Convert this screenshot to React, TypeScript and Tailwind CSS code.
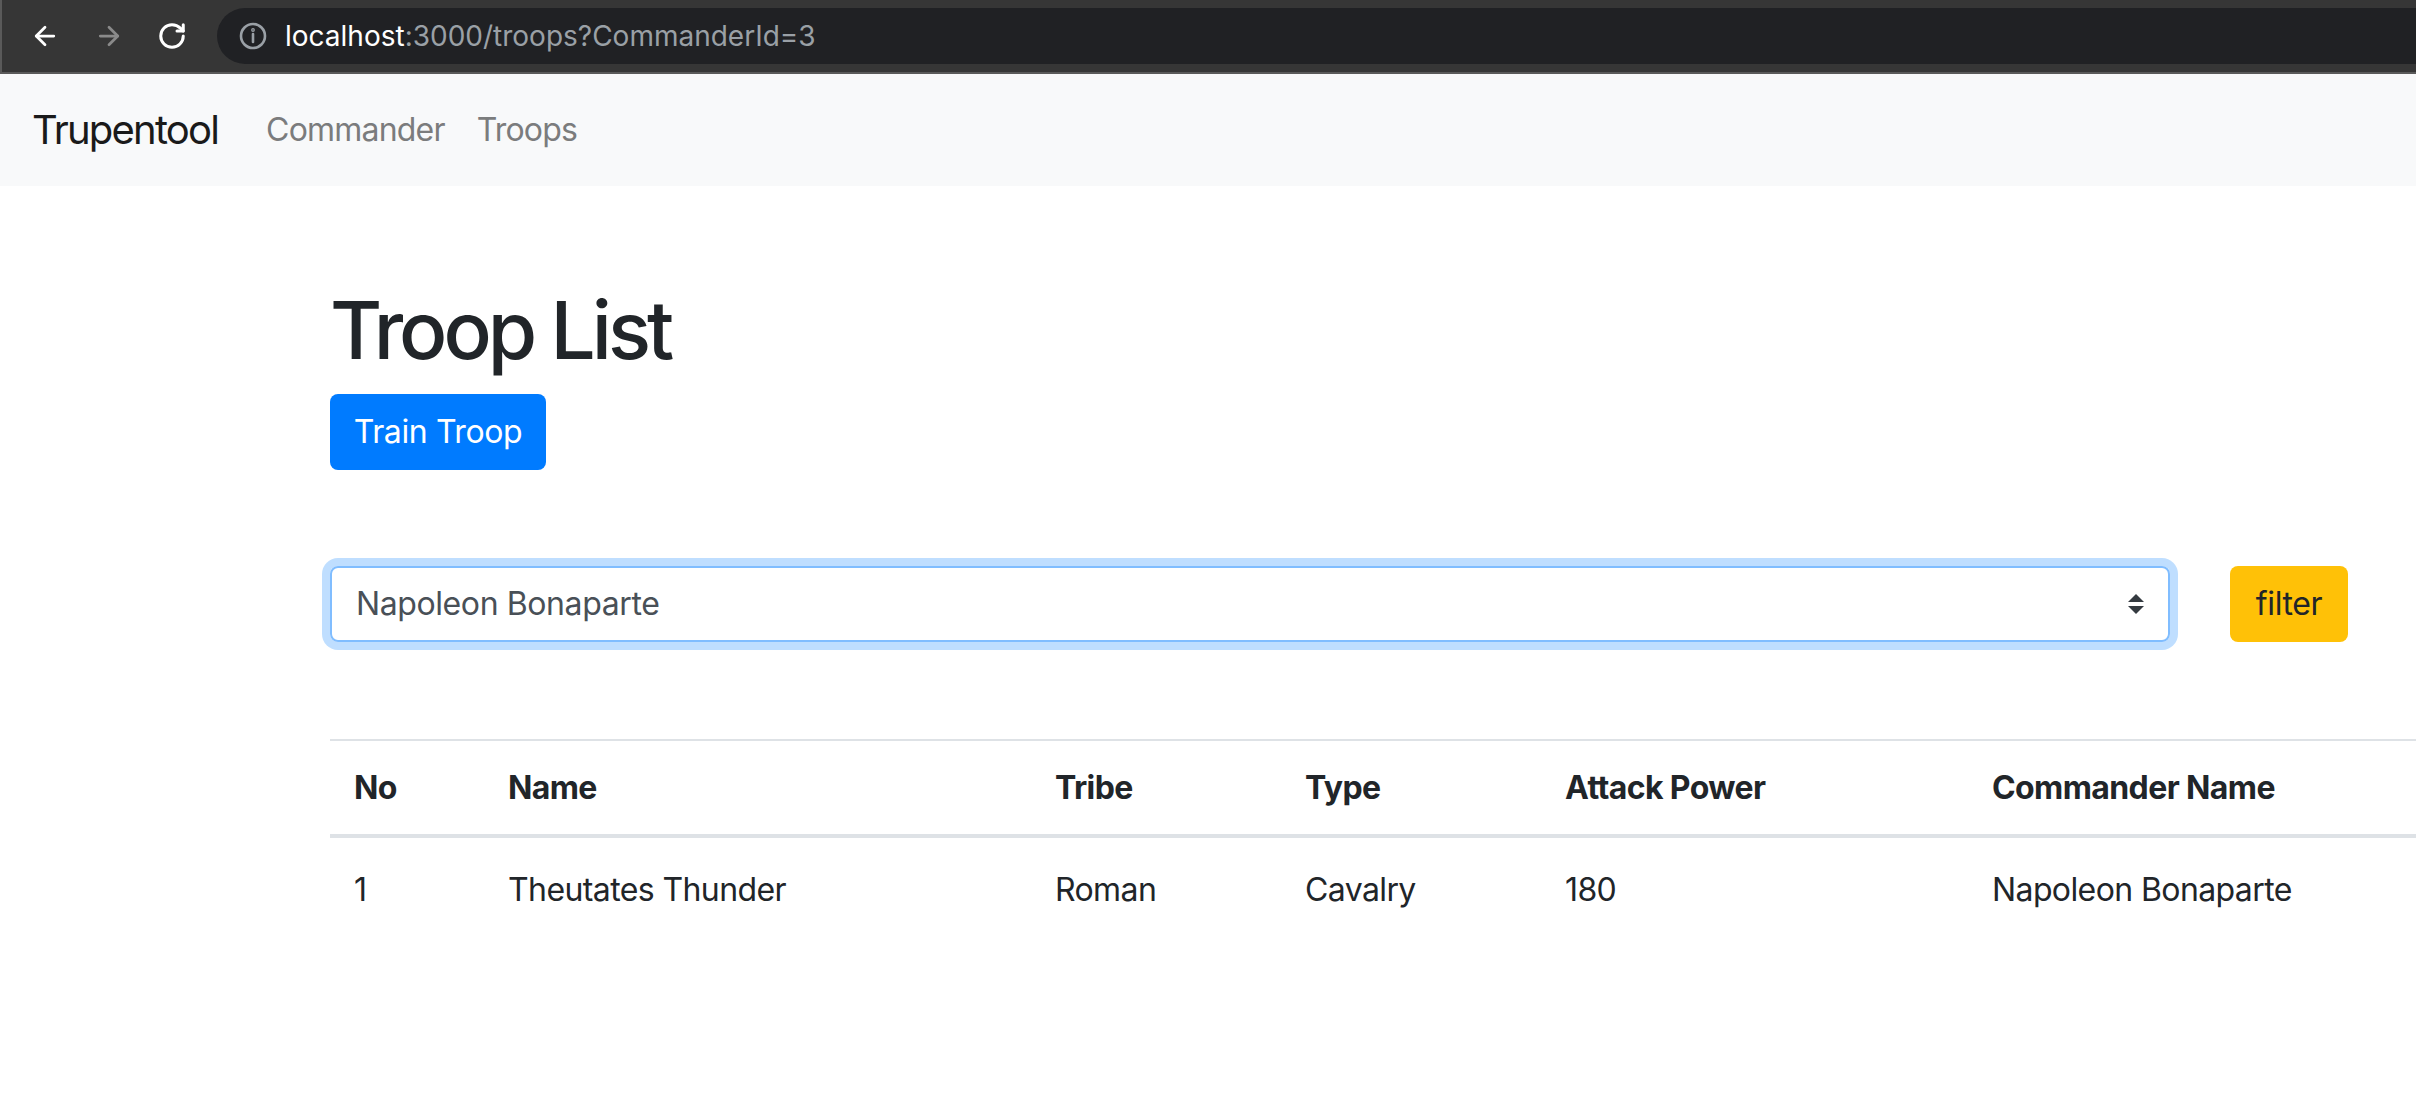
import { ArrowLeft, ArrowRight, RotateCw } from 'lucide-react';

const troops = [
  { no: 1, name: 'Theutates Thunder', tribe: 'Roman', type: 'Cavalry', attack: 180, commander: 'Napoleon Bonaparte' },
];

function BrowserBar() {
  return (
    <div className="h-[74px] bg-[#363636] border-l-2 border-[#5a5a5a] border-b-2 border-b-[#5a5a5a] flex items-center">
      <div className="flex items-center h-full">
        <ArrowLeft className="ml-[28px] w-[30px] h-[30px] text-white" strokeWidth={2.2} />
        <ArrowRight className="ml-[34px] w-[30px] h-[30px] text-[#8a8a8a]" strokeWidth={2.2} />
        <RotateCw className="ml-[33px] w-[30px] h-[30px] text-white" strokeWidth={2.4} />
      </div>
      <div className="ml-[30px] flex-1 h-[56px] bg-[#202124] rounded-l-full flex items-center">
        <svg viewBox="0 0 28 28" className="ml-[22px] w-[28px] h-[28px]" fill="none" stroke="#9aa0a6" strokeWidth="2.6">
          <circle cx="14" cy="14" r="12" />
          <line x1="14" y1="12" x2="14" y2="20" strokeLinecap="round" />
          <circle cx="14" cy="8" r="0.6" fill="#9aa0a6" />
        </svg>
        <span className="ml-[18px] text-[28px]">
          <span className="text-white">localhost</span>
          <span className="text-[#9aa0a6]">:3000/troops?CommanderId=3</span>
        </span>
      </div>
    </div>
  );
}

export default function App() {
  return (
    <div className="w-full min-h-screen bg-white overflow-hidden text-[#212529]" style={{ fontFamily: 'Inter, "Liberation Sans", sans-serif' }}>
      <BrowserBar />

      {/* Navbar */}
      <nav className="h-[112px] bg-[#f8f9fa] px-[32px] flex items-center">
        <span className="text-[40px] text-[#1a1a1a] mr-[32px] tracking-[-1.8px]">Trupentool</span>
        <a className="px-[16px] text-[32px] text-[#7b7c7d] tracking-[-0.8px]">Commander</a>
        <a className="px-[16px] text-[32px] text-[#7b7c7d] tracking-[-0.8px]">Troops</a>
      </nav>

      <div className="ml-[330px] w-[2220px] pt-[96px]">
        <h1 className="text-[80px] leading-[96px] font-medium mb-[16px] tracking-[-4px]">Troop List</h1>
        <button className="w-[216px] h-[76px] bg-[#007bff] text-white text-[32px] rounded-[8px] tracking-[-0.4px]">Train Troop</button>

        {/* Filter */}
        <div className="mt-[96px] flex items-center">
          <div className="w-[1840px] h-[76px] border-2 border-[#80bdff] rounded-[8px] ring-[8px] ring-[#007bff]/25 flex items-center justify-between pl-[24px] pr-[24px]">
            <span className="text-[32px] text-[#495057] tracking-[-0.4px]">Napoleon Bonaparte</span>
            <svg viewBox="0 0 4 5" className="w-[16px] h-[20px]">
              <path fill="#343a40" d="M2 0L0 2h4zm0 5L0 3h4z" />
            </svg>
          </div>
          <button className="ml-[60px] w-[118px] h-[76px] bg-[#ffc107] rounded-[8px] text-[32px] text-[#212529] tracking-[-0.4px]">filter</button>
        </div>

        {/* Table */}
        <table className="mt-[97px] w-[2220px] table-fixed border-collapse text-[32px] tracking-[-0.6px]">
          <colgroup>
            <col className="w-[154px]" />
            <col className="w-[547px]" />
            <col className="w-[250px]" />
            <col className="w-[260px]" />
            <col className="w-[427px]" />
            <col />
          </colgroup>
          <thead>
            <tr className="border-t-2 border-[#dee2e6] border-b-4 border-b-[#dee2e6]">
              {['No', 'Name', 'Tribe', 'Type', 'Attack Power', 'Commander Name'].map((h) => (
                <th key={h} className="h-[96px] px-[24px] text-left font-bold">{h}</th>
              ))}
            </tr>
          </thead>
          <tbody>
            {troops.map((t) => (
              <tr key={t.no}>
                <td className="h-[100px] px-[24px] pt-[6px]">{t.no}</td>
                <td className="h-[100px] px-[24px] pt-[6px]">{t.name}</td>
                <td className="h-[100px] px-[24px] pt-[6px]">{t.tribe}</td>
                <td className="h-[100px] px-[24px] pt-[6px]">{t.type}</td>
                <td className="h-[100px] px-[24px] pt-[6px]">{t.attack}</td>
                <td className="h-[100px] px-[24px] pt-[6px]">{t.commander}</td>
              </tr>
            ))}
          </tbody>
        </table>
      </div>
    </div>
  );
}
